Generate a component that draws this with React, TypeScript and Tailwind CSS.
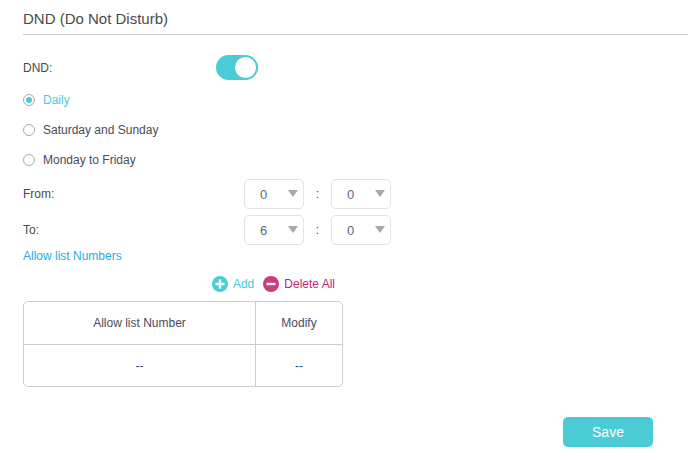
const PAGE_FONT = "font-['Liberation_Sans',Arial,sans-serif]";

function Radio({ label, checked = false }: { label: string; checked?: boolean }) {
  return (
    <div className="flex h-[30px] items-center">
      <span className="flex h-3 w-3 items-center justify-center rounded-full border border-[#a7a9ac] bg-white">
        {checked && <span className="h-[6px] w-[6px] rounded-full bg-[#4acbd6]" />}
      </span>
      <span className={`ml-2 text-xs ${checked ? 'text-[#4acbd6]' : 'text-[#4a4a5a]'}`}>{label}</span>
    </div>
  );
}

function TimeSelect({ value }: { value: string }) {
  return (
    <div className="relative flex h-[30px] w-[60px] items-center rounded-[5px] border border-[#e3e3e3] bg-white pl-[15px] pt-[2px] text-[13px] text-[#5c6a80]">
      {value}
      <span className="absolute right-[5px] top-[10px] h-0 w-0 border-x-[5px] border-t-[7px] border-x-transparent border-t-[#a7a9ac]" />
    </div>
  );
}

function TimeRow({ label, hour, minute }: { label: string; hour: string; minute: string }) {
  return (
    <div className="flex h-[30px] items-center">
      <span className="w-[221px] pb-[1px] text-xs text-[#4a4a4a]">{label}</span>
      <TimeSelect value={hour} />
      <span className="w-[27px] text-center text-xs text-[#4a4a4a]">:</span>
      <TimeSelect value={minute} />
    </div>
  );
}

export default function App() {
  return (
    <div className={`h-[460px] w-[693px] overflow-hidden bg-white pl-[23px] pr-[5px] ${PAGE_FONT}`}>
      <h1 className="h-[35px] border-b border-[#cccccc] pt-[10px] text-[15px] leading-[18px] font-normal text-[#4a4a4a]">
        DND (Do Not Disturb)
      </h1>

      <div className="mt-5 flex h-[25px] items-center">
        <span className="w-[193px] text-xs text-[#4a4a4a]">DND:</span>
        <span className="flex h-[25px] w-[42px] items-center justify-end rounded-full bg-[#4acbd6] pr-[2px]">
          <span className="h-[21px] w-[21px] rounded-full bg-white" />
        </span>
      </div>

      <div className="mt-[5px]">
        <Radio label="Daily" checked />
        <Radio label="Saturday and Sunday" />
        <Radio label="Monday to Friday" />
      </div>

      <div className="mt-1 flex flex-col gap-[6px]">
        <TimeRow label="From:" hour="0" minute="0" />
        <TimeRow label="To:" hour="6" minute="0" />
      </div>

      <div className="mt-[3px] text-xs leading-[16px] text-[#26abe2]">Allow list Numbers</div>

      <div className="mt-[10px] flex h-5 w-[320px] items-center justify-end pr-2 text-xs">
        <svg width="16" height="16" viewBox="0 0 16 16" className="mr-[5px]">
          <circle cx="8" cy="8" r="8" fill="#4acbd6" />
          <path d="M8 3.5v9M3.5 8h9" stroke="#fff" strokeWidth="2.4" />
        </svg>
        <span className="text-[#4acbd6]">Add</span>
        <svg width="16" height="16" viewBox="0 0 16 16" className="ml-[9px] mr-[5px]">
          <circle cx="8" cy="8" r="8" fill="#cf3a7d" />
          <path d="M3.5 8h9" stroke="#fff" strokeWidth="2.4" />
        </svg>
        <span className="text-[#c2256f]">Delete All</span>
      </div>

      <div className="mt-[7px] grid h-[86px] w-[320px] grid-cols-[232px_1fr] grid-rows-[43px_1fr] rounded-[5px] border border-[#cccccc] text-center text-xs text-[#4a4a5a]">
        <div className="flex items-center justify-center border-r border-b border-[#cccccc]">Allow list Number</div>
        <div className="flex items-center justify-center border-b border-[#cccccc]">Modify</div>
        <div className="flex items-center justify-center border-r border-[#cccccc] text-[#3a5068]">--</div>
        <div className="flex items-center justify-center text-[#3a5068]">--</div>
      </div>

      <div className="mt-[30px] flex w-[630px] justify-end">
        <button className="h-[30px] w-[90px] rounded-[5px] bg-[#4acbd6] text-sm text-white">Save</button>
      </div>
    </div>
  );
}
